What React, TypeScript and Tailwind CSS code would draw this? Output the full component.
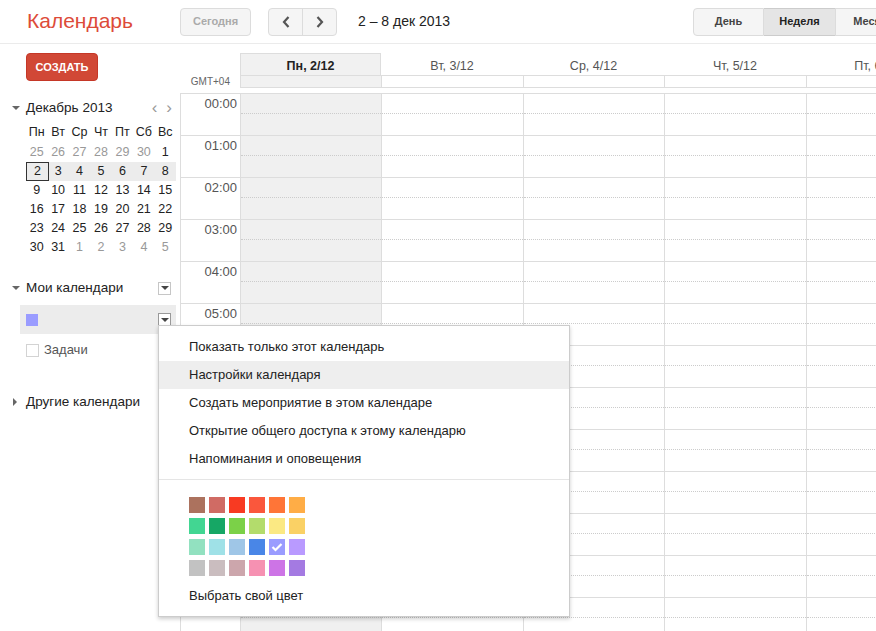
import React from 'react';

const font = { fontFamily: '"Liberation Sans", Arial, sans-serif' };

const dayCols = [
  { label: 'Пн, 2/12', w: 'w-[141px]', today: true },
  { label: 'Вт, 3/12', w: 'w-[142px]' },
  { label: 'Ср, 4/12', w: 'w-[141px]' },
  { label: 'Чт, 5/12', w: 'w-[142px]' },
  { label: 'Пт, 6/12', w: 'w-[141px]' },
  { label: 'Сб, 7/12', w: 'w-[142px]' },
  { label: 'Вс, 8/12', w: 'w-[141px]' },
];

const hours = Array.from({ length: 14 }, (_, i) => String(i).padStart(2, '0') + ':00');

const weeks = [
  ['25', '26', '27', '28', '29', '30', '1'],
  ['2', '3', '4', '5', '6', '7', '8'],
  ['9', '10', '11', '12', '13', '14', '15'],
  ['16', '17', '18', '19', '20', '21', '22'],
  ['23', '24', '25', '26', '27', '28', '29'],
  ['30', '31', '1', '2', '3', '4', '5'],
];

const palette = [
  ['#ac725e', '#d06b64', '#f83a22', '#fa573c', '#ff7537', '#ffad46'],
  ['#42d692', '#16a765', '#7bd148', '#b3dc6c', '#fbe983', '#fad165'],
  ['#92e1c0', '#9fe1e7', '#9fc6e7', '#4986e7', '#9a9cff', '#b99aff'],
  ['#c2c2c2', '#cabdbf', '#cca6ac', '#f691b2', '#cd74e6', '#a47ae2'],
];

function TriDown() {
  return <span className="inline-block w-0 h-0 border-l-[4px] border-r-[4px] border-t-[4px] border-l-transparent border-r-transparent border-t-[#666]" />;
}

function TriRight() {
  return <span className="inline-block w-0 h-0 border-t-[4px] border-b-[4px] border-l-[4px] border-t-transparent border-b-transparent border-l-[#666]" />;
}

function DropBox({ dark }: { dark?: boolean }) {
  return (
    <div className={`w-[13px] h-[13px] border flex items-center justify-center bg-white ${dark ? 'border-[#999]' : 'border-[#c6c6c6]'}`}>
      <span className="inline-block w-0 h-0 border-l-[4px] border-r-[4px] border-t-[4px] border-l-transparent border-r-transparent border-t-[#444]" />
    </div>
  );
}

export default function App() {
  return (
    <div className="relative w-[876px] h-[631px] overflow-hidden bg-white text-[#222]" style={font}>
      {/* шапка */}
      <div className="h-[44px] border-b border-[#ebebeb] flex items-center">
        <div className="w-[180px] pl-[27px] text-[21px] text-[#dd4b39] leading-none pb-[2px]">Календарь</div>
        <button className="h-[28px] w-[71px] border border-[#dcdcdc] bg-[#f5f5f5] rounded-sm text-[11px] text-[#aaa] font-bold">Сегодня</button>
        <div className="ml-[17px] flex h-[28px] border border-[#dcdcdc] rounded-sm bg-[#f5f5f5]">
          <div className="w-[34px] flex items-center justify-center border-r border-[#dcdcdc]">
            <svg width="10" height="14" viewBox="0 0 10 14"><path d="M7.5 2 L3 7 L7.5 12" stroke="#555" strokeWidth="2.2" fill="none" /></svg>
          </div>
          <div className="w-[33px] flex items-center justify-center">
            <svg width="10" height="14" viewBox="0 0 10 14"><path d="M2.5 2 L7 7 L2.5 12" stroke="#555" strokeWidth="2.2" fill="none" /></svg>
          </div>
        </div>
        <div className="ml-[21px] text-[14px] text-[#222]">2 – 8 дек 2013</div>
        <div className="ml-auto flex h-[28px] mr-[-30px]">
          <div className="w-[71px] border border-[#dcdcdc] bg-[#f5f5f5] rounded-l-sm flex items-center justify-center text-[11px] font-bold text-[#444]">День</div>
          <div className="w-[71px] border-y border-[#ccc] bg-[#e5e5e5] flex items-center justify-center text-[11px] font-bold text-[#222]">Неделя</div>
          <div className="w-[71px] border border-[#dcdcdc] bg-[#f5f5f5] flex items-center justify-center text-[11px] font-bold text-[#444]">Месяц</div>
        </div>
      </div>

      <div className="flex">
        {/* боковая панель */}
        <div className="w-[180px] shrink-0 pt-[9px]">
          <div className="pl-[26px]">
            <button className="h-[28px] w-[72px] bg-[#d14836] rounded-sm text-white text-[11px] font-bold border border-[#c53727]">СОЗДАТЬ</button>
          </div>

          <div className="mt-[17px] flex items-center h-[20px]">
            <div className="w-[26px] pl-[12px] flex items-center"><TriDown /></div>
            <div className="text-[13.5px]">Декабрь 2013</div>
            <div className="ml-auto mr-[8px] flex gap-[9px] text-[#999] text-[17px] leading-none pb-[2px]">
              <span>‹</span>
              <span>›</span>
            </div>
          </div>

          <div className="ml-[26px] w-[150px] mt-[4px] text-[12.5px]">
            <div className="grid grid-cols-7 h-[21px] items-center text-center">
              {['Пн', 'Вт', 'Ср', 'Чт', 'Пт', 'Сб', 'Вс'].map((d) => (
                <div key={d}>{d}</div>
              ))}
            </div>
            {weeks.map((wk, wi) => (
              <div key={wi} className={`grid grid-cols-7 h-[19px] items-center text-center ${wi === 1 ? 'bg-[#ececec]' : ''}`}>
                {wk.map((d, di) => {
                  const other = (wi === 0 && di < 6) || (wi === 5 && di > 1);
                  const today = wi === 1 && di === 0;
                  return (
                    <div
                      key={di}
                      className={`h-[19px] leading-[17px] ${other ? 'text-[#999]' : 'text-[#222]'} ${today ? 'border border-[#333] w-[23px]' : 'border border-transparent'}`}
                    >
                      {d}
                    </div>
                  );
                })}
              </div>
            ))}
          </div>

          <div className="mt-[21px] flex items-center h-[20px]">
            <div className="w-[26px] pl-[12px] flex items-center"><TriDown /></div>
            <div className="text-[13.5px]">Мои календари</div>
            <div className="ml-auto mr-[9px]"><DropBox /></div>
          </div>

          <div className="mt-[7px] ml-[20px] w-[156px] h-[29px] bg-[#ececec] flex items-center">
            <div className="ml-[6px] w-[12px] h-[12px] bg-[#9a9cff]" />
            <div className="ml-auto mr-[5px]"><DropBox dark /></div>
          </div>

          <div className="mt-[9px] ml-[26px] flex items-center h-[14px]">
            <div className="w-[13px] h-[13px] border border-[#d3d3d3] bg-white" />
            <div className="ml-[5px] text-[13px] text-[#555]">Задачи</div>
          </div>

          <div className="mt-[35px] flex items-center h-[20px]">
            <div className="w-[26px] pl-[13px] flex items-center"><TriRight /></div>
            <div className="text-[13.5px]">Другие календари</div>
          </div>
        </div>

        {/* сетка недели */}
        <div className="flex-1 overflow-hidden pt-[9px]">
          <div className="flex h-[23px]">
            <div className="w-[60px] shrink-0" />
            {dayCols.map((c, i) => (
              <div
                key={i}
                className={`${c.w} shrink-0 border-b border-[#ddd] flex items-center justify-center pt-[4px] text-[12.5px] ${c.today ? 'bg-[#f1f1f1] border-t border-x font-bold text-[#222]' : 'text-[#555]'}`}
              >
                {c.label}
              </div>
            ))}
          </div>
          <div className="flex h-[12px]">
            <div className="w-[60px] shrink-0 text-[10px] text-[#666] text-right pr-[10px] leading-[12px]">GMT+04</div>
            {dayCols.map((c, i) => (
              <div key={i} className={`${c.w} shrink-0 border-b border-l border-[#ddd] ${c.today ? 'bg-[#f1f1f1]' : ''}`} />
            ))}
          </div>
          <div className="h-[5px]" />
          <div className="border-t border-l border-[#ddd] flex">
            <div className="w-[59px] shrink-0">
              {hours.map((h) => (
                <div key={h} className="h-[42px] border-b border-[#ddd] text-right pr-[3px] pt-[3px] text-[13px] leading-[14px] text-[#555]">
                  {h}
                </div>
              ))}
            </div>
            {dayCols.map((c, i) => (
              <div key={i} className={`${c.w} shrink-0 border-l border-[#ddd] ${c.today ? 'bg-[#f0f0f0]' : ''}`}>
                {hours.map((h) => (
                  <div key={h} className="h-[42px] border-b border-[#ddd]">
                    <div className="h-[20px] border-b border-dotted border-[#ccc]" />
                  </div>
                ))}
              </div>
            ))}
          </div>
        </div>
      </div>

      {/* меню календаря */}
      <div className="absolute left-[158px] top-[325px] w-[412px] h-[292px] bg-white border border-[#ccc] shadow-[0_2px_4px_rgba(0,0,0,0.2)] text-[13px] text-[#222]">
        <div className="pt-[7px]">
          {[
            'Показать только этот календарь',
            'Настройки календаря',
            'Создать мероприятие в этом календаре',
            'Открытие общего доступа к этому календарю',
            'Напоминания и оповещения',
          ].map((t, i) => (
            <div key={t} className={`h-[28px] flex items-center pl-[30px] ${i === 1 ? 'bg-[#eeeeee]' : ''}`}>
              {t}
            </div>
          ))}
        </div>
        <div className="mt-[6px] border-t border-[#e5e5e5]" />
        <div className="pl-[30px] pt-[17px] flex flex-col gap-[5px]">
          {palette.map((row, ri) => (
            <div key={ri} className="flex gap-[4px]">
              {row.map((col) => (
                <div key={col} className="w-[16px] h-[16px] flex items-center justify-center" style={{ backgroundColor: col }}>
                  {col === '#9a9cff' && (
                    <svg width="12" height="10" viewBox="0 0 12 10"><path d="M1.5 5 L4.5 8 L10.5 2" stroke="#fff" strokeWidth="2.2" fill="none" /></svg>
                  )}
                </div>
              ))}
            </div>
          ))}
        </div>
        <div className="pl-[30px] mt-[12px] h-[16px] leading-[16px]">Выбрать свой цвет</div>
      </div>
    </div>
  );
}
